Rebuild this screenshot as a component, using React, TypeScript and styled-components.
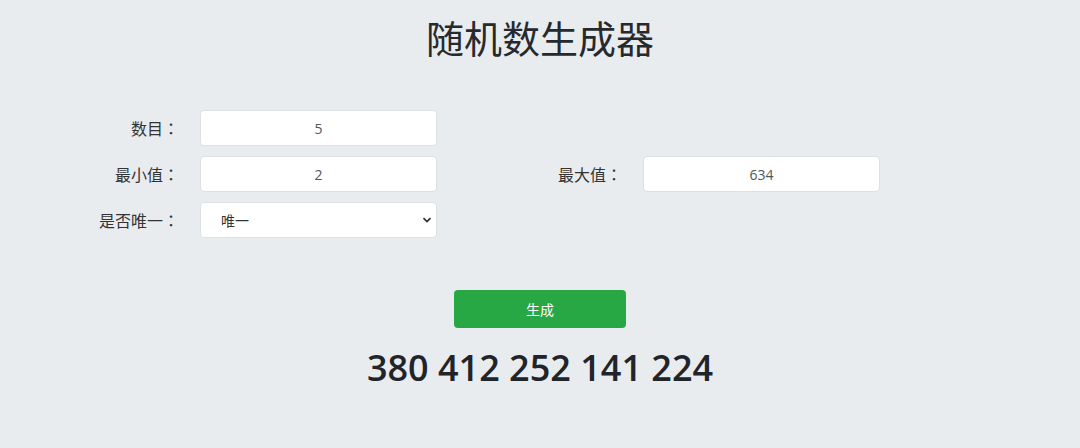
import { useState } from 'react';
import styled, { createGlobalStyle } from 'styled-components';

const GlobalStyle = createGlobalStyle`
  html, body {
    margin: 0;
    padding: 0;
    background: #e9ecef;
    font-family: "Noto Sans CJK SC", "Open Sans", sans-serif;
    color: #212529;
  }
  * { box-sizing: border-box; }
`;

const Page = styled.main`
  width: 1080px;
  height: 448px;
  padding-top: 13px;
  display: flex;
  flex-direction: column;
`;

const Title = styled.h1`
  margin: 0;
  text-align: center;
  font-size: 38px;
  font-weight: 400;
  line-height: 48px;
  color: #262a2e;
`;

const Form = styled.div`
  margin: 49px 0 0 10px;
  display: grid;
  grid-template-columns: 174px 237px 174px 237px;
  grid-auto-rows: 36px;
  column-gap: 16px;
  row-gap: 10px;
  width: 870px;
`;

const Label = styled.label`
  display: flex;
  align-items: center;
  justify-content: flex-end;
  padding-right: 5px;
  font-family: "Noto Sans CJK TC", "Noto Sans CJK SC", sans-serif;
  font-size: 16px;
  color: #333;
`;

const Input = styled.input`
  width: 100%;
  height: 36px;
  border: 1px solid #dde1e5;
  border-radius: 4px;
  background: #fff;
  text-align: center;
  font-family: "Open Sans", "Noto Sans CJK SC", sans-serif;
  font-size: 14px;
  color: #555;
  outline: none;
`;

const SelectBox = styled.div`
  position: relative;
  width: 100%;
  height: 36px;

  svg {
    position: absolute;
    right: 5px;
    top: 14px;
    pointer-events: none;
  }
`;

const Select = styled.select`
  appearance: none;
  width: 100%;
  height: 36px;
  border: 1px solid #dde1e5;
  border-radius: 4px;
  background: #fff;
  padding: 0 20px;
  font-family: "Noto Sans CJK SC", sans-serif;
  font-size: 14px;
  color: #333;
  outline: none;
`;

const Spacer = styled.div``;

const Actions = styled.div`
  margin-top: 52px;
  display: flex;
  justify-content: center;
`;

const Button = styled.button`
  width: 172px;
  height: 38px;
  border: 0;
  border-radius: 4px;
  background: #28a745;
  color: #fff;
  font-family: "Noto Sans CJK SC", sans-serif;
  font-size: 14px;
  cursor: pointer;
`;

const Result = styled.div`
  margin-top: 17px;
  text-align: center;
  font-family: "Open Sans", sans-serif;
  font-size: 36px;
  font-weight: 600;
  line-height: 46px;
  color: #212529;
`;

function gen(count: number, min: number, max: number, unique: boolean) {
  const out: number[] = [];
  let guard = 0;
  while (out.length < count && guard < 10000) {
    guard++;
    const n = Math.floor(Math.random() * (max - min + 1)) + min;
    if (unique && out.includes(n)) continue;
    out.push(n);
  }
  return out;
}

export default function App() {
  const [count, setCount] = useState('5');
  const [min, setMin] = useState('2');
  const [max, setMax] = useState('634');
  const [unique, setUnique] = useState('1');
  const [result, setResult] = useState<number[]>([380, 412, 252, 141, 224]);

  return (
    <>
      <GlobalStyle />
      <Page>
        <Title>随机数生成器</Title>
        <Form>
          <Label>数目：</Label>
          <Input value={count} onChange={(e) => setCount(e.target.value)} />
          <Spacer />
          <Spacer />

          <Label>最小值：</Label>
          <Input value={min} onChange={(e) => setMin(e.target.value)} />
          <Label>最大值：</Label>
          <Input value={max} onChange={(e) => setMax(e.target.value)} />

          <Label>是否唯一：</Label>
          <SelectBox>
            <Select value={unique} onChange={(e) => setUnique(e.target.value)}>
              <option value="1">唯一</option>
              <option value="0">不唯一</option>
            </Select>
            <svg width="10" height="8" viewBox="0 0 10 8">
              <path d="M1.5 2.2 L5 5.6 L8.5 2.2" fill="none" stroke="#333" strokeWidth="1.8" />
            </svg>
          </SelectBox>
        </Form>
        <Actions>
          <Button
            onClick={() =>
              setResult(gen(Number(count), Number(min), Number(max), unique === '1'))
            }
          >
            生成
          </Button>
        </Actions>
        <Result>{result.join(' ')}</Result>
      </Page>
    </>
  );
}
